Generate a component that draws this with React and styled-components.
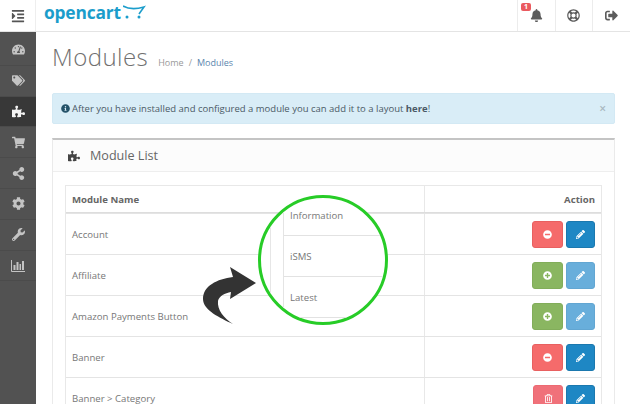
import React from 'react';
import styled, { createGlobalStyle } from 'styled-components';
import {
  FaBell, FaCog, FaIndent, FaInfoCircle, FaMinusCircle, FaPencilAlt, FaPlusCircle, FaPuzzlePiece,
  FaRegLifeRing, FaRegTrashAlt, FaShareAlt, FaShoppingCart, FaSignOutAlt, FaTachometerAlt,
  FaTags, FaWrench,
} from 'react-icons/fa';

const Global = createGlobalStyle`
html, body { margin: 0; padding: 0; background: #fff; }
body { font-family: "Open Sans", "Liberation Sans", sans-serif; color: #666; }
* { box-sizing: border-box; }
`;

const Page = styled.div`
width: 630px;
height: 404px;
overflow: hidden;
position: relative;
display: flex;
flex-direction: column;
`;

const Header = styled.header`
height: 32px;
flex: none;
display: flex;
align-items: stretch;
border-bottom: 1px solid #e4e4e4;
`;

const Toggle = styled.div`
width: 36px;
display: flex;
align-items: center;
justify-content: center;
color: #555;
font-size: 14px;
border-right: 1px solid #eee;
`;

const Logo = styled.div`
flex: 1;
display: flex;
align-items: flex-start;
padding: 0 0 0 8px;
`;

const LogoText = styled.span`
font-family: "Open Sans", sans-serif;
font-weight: 700;
font-size: 17.4px;
line-height: 24px;
letter-spacing: -0.2px;
color: #1b9dcb;
`;

const HeaderCell = styled.div`
position: relative;
width: 37.7px;
display: flex;
align-items: center;
justify-content: center;
border-left: 1px solid #ececec;
color: #5c5c5c;
font-size: 13px;
`;

const Badge = styled.span`
position: absolute;
left: 3px;
top: 3px;
width: 10px;
height: 8px;
border-radius: 2px;
background: #ea5a5f;
color: #fff;
font-size: 7px;
font-weight: 700;
line-height: 8px;
text-align: center;
`;

const Body = styled.div`
flex: 1;
display: flex;
min-height: 0;
`;

const Sidebar = styled.nav`
width: 36px;
flex: none;
background: #525252;
display: flex;
flex-direction: column;
padding-top: 3px;
`;

const SideItem = styled.div`
height: 30.8px;
flex: none;
display: flex;
align-items: center;
justify-content: center;
font-size: 13px;
color: ${p => (p.$active ? '#f4f4f4' : '#c4c4c4')};
background: ${p => (p.$active ? '#383838' : 'transparent')};
border-bottom: 1px solid #4b4b4b;
`;

const Content = styled.main`
flex: 1;
min-width: 0;
padding: 0 15px 0 16px;
`;

const TitleRow = styled.div`
height: 61px;
display: flex;
align-items: baseline;
padding-top: 7px;
`;

const Title = styled.h1`
margin: 0;
font-size: 24px;
line-height: 36px;
font-weight: 300;
color: #707070;
letter-spacing: 0.45px;
`;

const Crumbs = styled.div`
margin-left: 10px;
font-size: 9px;
color: #999;
display: flex;
gap: 5px;
`;

const CrumbLink = styled.span`
color: #5b86ad;
`;

const Alert = styled.div`
height: 31px;
background: #d9edf7;
border: 1px solid #d3e9f4;
border-radius: 2px;
display: flex;
align-items: center;
padding: 0 8px;
font-size: 9.5px;
color: #4b5a66;
`;

const AlertIcon = styled(FaInfoCircle)`
font-size: 9px;
color: #245269;
margin-right: 2px;
`;

const AlertClose = styled.span`
margin-left: auto;
font-size: 12px;
color: #a9b8c0;
font-weight: 600;
`;

const Panel = styled.section`
margin-top: 14px;
height: 400px;
border: 1px solid #eaeaea;
border-top: 2px solid #c4c4c4;
`;

const PanelHead = styled.div`
height: 32px;
display: flex;
align-items: center;
gap: 10px;
padding-left: 15px;
background: #fcfcfc;
border-bottom: 1px solid #eee;
font-size: 12.6px;
color: #666;
`;

const PanelIcon = styled(FaPuzzlePiece)`
font-size: 12px;
color: #444;
`;

const Table = styled.div`
margin: 13px 12px 0;
border: 1px solid #e8e8e8;
`;

const Row = styled.div`
display: grid;
grid-template-columns: 358px 1fr;
height: 41px;
border-top: 1px solid #e4e4e4;
`;

const HeadRow = styled(Row)`
height: 27px;
border-top: 0;
border-bottom: 1px solid #ddd;
`;

const Cell = styled.div`
display: flex;
align-items: center;
padding: 0 6px;
font-size: 9.6px;
color: #777;
`;

const HeadCell = styled(Cell)`
font-weight: 700;
color: #666;
`;

const ActionCell = styled(Cell)`
justify-content: flex-end;
gap: 3px;
border-left: 1px solid #e8e8e8;
padding-right: 6px;
`;

const ActionHead = styled(ActionCell)`
font-weight: 700;
color: #666;
`;

const Btn = styled.button`
width: ${p => p.$w}px;
height: 27px;
padding: 0;
border-radius: 3px;
border: 1px solid ${p => p.$edge};
background: ${p => p.$bg};
color: #fff;
font-size: 9px;
display: flex;
align-items: center;
justify-content: center;
`;

const Circle = styled.div`
position: absolute;
left: 258px;
top: 195px;
width: 130px;
height: 130px;
border-radius: 50%;
border: 3px solid #27cc27;
background: #fff;
overflow: hidden;
`;

const GuideLine = styled.div`
position: absolute;
left: 9px;
top: 0;
bottom: 14px;
width: 1px;
background: #e6e6e6;
`;

const Menu = styled.div`
position: absolute;
left: 22px;
top: 0;
right: 0;
border-left: 1px solid #e4e4e4;
`;

const MenuItem = styled.div`
height: 41px;
display: flex;
align-items: center;
padding: 0 0 0 6px;
font-size: 9.6px;
color: #777;
border-bottom: 1px solid #e2e2e2;
&:first-child {
  height: 38px;
  padding: 0 0 3px 6px;
}
`;

const Arrow = styled.svg`
position: absolute;
left: 202px;
top: 266px;
width: 56px;
height: 60px;
`;

const Cart = styled.svg`
width: 24px;
height: 20px;
margin: 2px 0 0 2px;
`;

const BarsIcon = styled.svg`
width: 14px;
height: 13px;
`;

const rows = [
  { name: 'Account', on: true },
  { name: 'Affiliate', on: false },
  { name: 'Amazon Payments Button', on: false },
  { name: 'Banner', on: true },
  { name: 'Banner > Category', on: true, trash: true },
];

function Bars() {
  return (
    <BarsIcon viewBox="0 0 14 13">
      <path d="M0.5 1V12.5H14" fill="none" stroke="currentColor" />
      <path d="M2.5 6h2v5h-2zM5.5 3h2v8h-2zM8.5 5h1.5v6h-1.5zM11 2h2v9h-2z" fill="currentColor" />
    </BarsIcon>
  );
}

const side = [FaTachometerAlt, FaTags, FaPuzzlePiece, FaShoppingCart, FaShareAlt, FaCog, FaWrench, Bars];

function Actions({ row }) {
  const first = row.trash
    ? <Btn $w={30} $bg="#f0717a" $edge="#ec6a72"><FaRegTrashAlt /></Btn>
    : row.on
      ? <Btn $w={31} $bg="#f56b6b" $edge="#e86060"><FaMinusCircle /></Btn>
      : <Btn $w={31} $bg="#8ab661" $edge="#82ad5a"><FaPlusCircle /></Btn>;
  return (
    <ActionCell>
      {first}
      {row.on
        ? <Btn $w={29} $bg="#1e87c4" $edge="#1b78ae"><FaPencilAlt /></Btn>
        : <Btn $w={29} $bg="#68aedb" $edge="#62a6d2"><FaPencilAlt /></Btn>}
    </ActionCell>
  );
}

export default function App() {
  return (
    <Page>
      <Global />
      <Header>
        <Toggle><FaIndent /></Toggle>
        <Logo>
          <LogoText>opencart</LogoText>
          <Cart viewBox="0 0 24 20">
            <path d="M0 4 C7 8 14 7 21 5 L16 12" fill="none" stroke="#1b9dcb" strokeWidth="1.6" />
            <circle cx="4" cy="15" r="1.5" fill="#1b9dcb" />
            <circle cx="16" cy="15" r="1.5" fill="#1b9dcb" />
          </Cart>
        </Logo>
        <HeaderCell><Badge>1</Badge><FaBell /></HeaderCell>
        <HeaderCell><FaRegLifeRing /></HeaderCell>
        <HeaderCell><FaSignOutAlt /></HeaderCell>
      </Header>
      <Body>
        <Sidebar>
          {side.map((Icon, i) => (
            <SideItem key={i} $active={i === 2}><Icon /></SideItem>
          ))}
        </Sidebar>
        <Content>
          <TitleRow>
            <Title>Modules</Title>
            <Crumbs>
              <span>Home</span>
              <span>/</span>
              <CrumbLink>Modules</CrumbLink>
            </Crumbs>
          </TitleRow>
          <Alert>
            <AlertIcon />
            <span>After you have installed and configured a module you can add it to a layout <b>here</b>!</span>
            <AlertClose>×</AlertClose>
          </Alert>
          <Panel>
            <PanelHead><PanelIcon />Module List</PanelHead>
            <Table>
              <HeadRow>
                <HeadCell>Module Name</HeadCell>
                <ActionHead>Action</ActionHead>
              </HeadRow>
              {rows.map(row => (
                <Row key={row.name}>
                  <Cell>{row.name}</Cell>
                  <Actions row={row} />
                </Row>
              ))}
            </Table>
          </Panel>
        </Content>
      </Body>
      <Circle>
        <GuideLine />
        <Menu>
          <MenuItem>Information</MenuItem>
          <MenuItem>iSMS</MenuItem>
          <MenuItem>Latest</MenuItem>
        </Menu>
      </Circle>
      <Arrow viewBox="0 0 56 60">
        <path d="M54 17 L28 1 L31 11 C15 13 1 20 1 33 C1 44 18 52 31 58 C22 52 15 44 16 35 C17 30 23 27 29 26 L28 33 Z" fill="#333" />
      </Arrow>
    </Page>
  );
}
